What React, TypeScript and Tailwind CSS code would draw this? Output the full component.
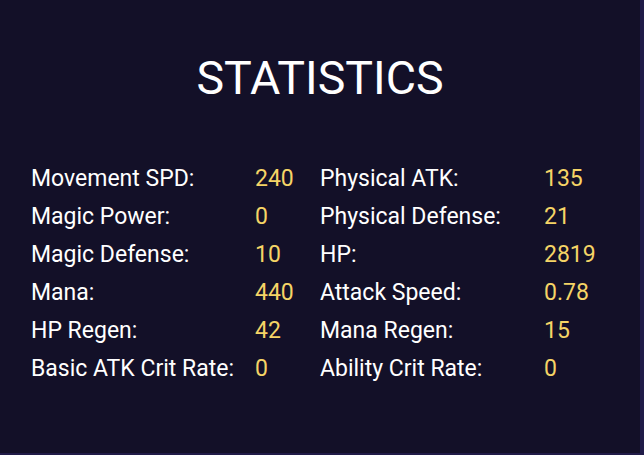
const stats: [string, string][][] = [
  [
    ['Movement SPD:', '240'],
    ['Magic Power:', '0'],
    ['Magic Defense:', '10'],
    ['Mana:', '440'],
    ['HP Regen:', '42'],
    ['Basic ATK Crit Rate:', '0'],
  ],
  [
    ['Physical ATK:', '135'],
    ['Physical Defense:', '21'],
    ['HP:', '2819'],
    ['Attack Speed:', '0.78'],
    ['Mana Regen:', '15'],
    ['Ability Crit Rate:', '0'],
  ],
]

export default function App() {
  return (
    <div className="h-[455px] w-[644px] border-b-2 border-r-4 border-[#201b48] bg-[#131028] font-['Roboto',sans-serif]">
      <h1 className="pt-[50px] text-center text-[46.5px] leading-[56px] text-white">STATISTICS</h1>
      <div className="mt-[54px] flex px-[31px]">
        {stats.map((column, i) => (
          <div key={i} className="flex w-[289px] flex-col">
            {column.map(([label, value]) => (
              <div key={label} className="flex h-[38px] items-center text-[23px]">
                <span className="w-[224px] text-white">{label}</span>
                <span className="text-[#f5d466]">{value}</span>
              </div>
            ))}
          </div>
        ))}
      </div>
    </div>
  )
}
